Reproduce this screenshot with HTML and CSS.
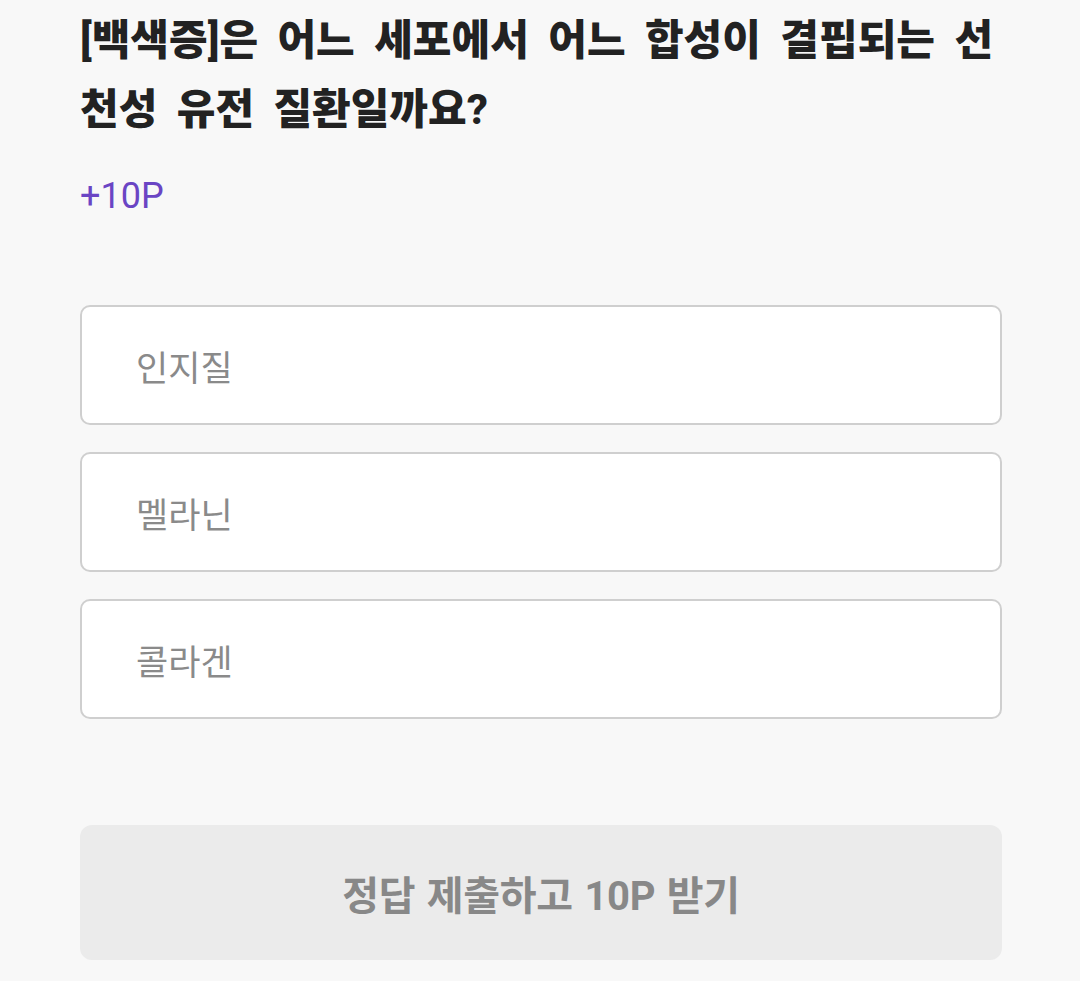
FILE: index.html
```html
<!DOCTYPE html>
<html lang="ko">
<head>
    <meta charset="UTF-8">
    <meta name="viewport" content="width=device-width, initial-scale=1.0">
    <title>퀴즈</title>
    <link rel="stylesheet" href="styles.css">
</head>
<body>
<div class="quiz">
    <h1 class="question">[백색증]은 어느 세포에서 어느 합성이 결핍되는 선천성 유전 질환일까요?</h1>
    <div class="reward">+10P</div>

    <div class="options">
        <button type="button" class="option">인지질</button>
        <button type="button" class="option">멜라닌</button>
        <button type="button" class="option">콜라겐</button>
    </div>

    <button type="button" class="submit" disabled>정답 제출하고 10P 받기</button>
</div>
</body>
</html>
```

FILE: styles.css
```css
body {
    margin: 0;
    background-color: #f8f8f8;
    font-family: Roboto, "Noto Sans CJK KR", sans-serif;
}
.quiz {
    padding: 6px 78px 0 80px;
}
.question {
    margin: 0;
    font-size: 42px;
    line-height: 69px;
    font-weight: 800;
    word-spacing: 9px;
    color: #222;
    word-break: break-all;
}
.reward {
    margin-top: 28px;
    font-size: 36px;
    line-height: 48px;
    color: #6a45c4;
}
.options {
    display: flex;
    flex-direction: column;
    gap: 27px;
    margin-top: 85px;
}
.option {
    height: 120px;
    padding: 0 54px;
    background-color: #fff;
    border: 2px solid #cfcfcf;
    border-radius: 10px;
    text-align: left;
    font-family: inherit;
    font-size: 35px;
    color: #8a8a8a;
}
.submit {
    display: block;
    width: 100%;
    height: 135px;
    margin-top: 106px;
    background-color: #ebebeb;
    border: none;
    border-radius: 12px;
    font-family: inherit;
    font-size: 40px;
    font-weight: 700;
    letter-spacing: -0.3px;
    word-spacing: 2px;
    color: #888;
}
```
